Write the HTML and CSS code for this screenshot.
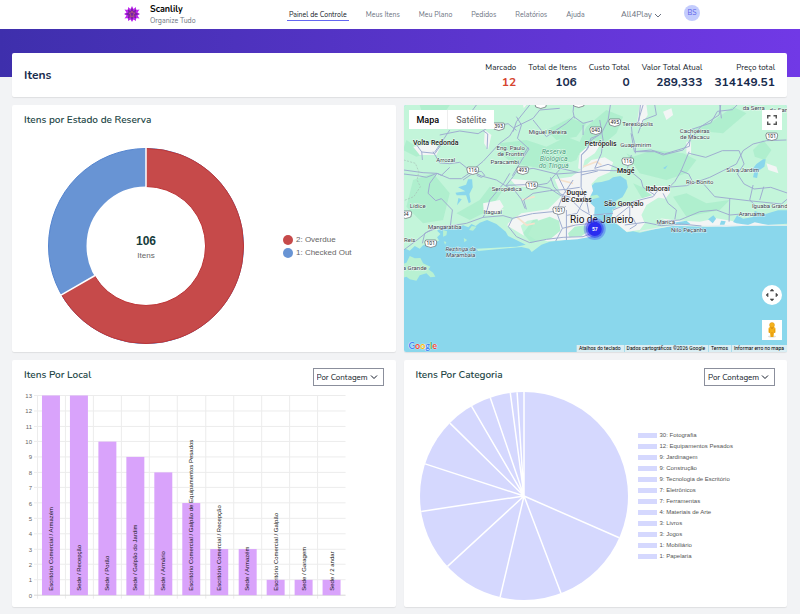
FILE: index.html
```html
<!DOCTYPE html>
<html lang="pt-BR">
<head>
<meta charset="utf-8">
<meta name="viewport" content="width=device-width, initial-scale=1">
<title>Scanlily – Painel de Controle</title>
<link rel="stylesheet" href="styles.css">
</head>
<body>
<header class="topbar">
  <a class="brand" href="#">
    <svg class="brand-logo" viewBox="0 0 32 32" aria-hidden="true">
      <path fill="#c026f0" d="M16 0l3 6 5-4 0 6 7-1-4 6 5 3-5 3 4 6-7-1 0 6-5-3-3 5-3-5-5 3 0-6-7 1 4-6-5-3 5-3-4-6 7 1 0-6 5 4z"/>
      <path fill="#7a1fa8" d="M16 3l3 7 6-4-2 7 7 3-7 3 2 7-6-4-3 7-3-7-6 4 2-7-7-3 7-3-2-7 6 4z"/>
      <path fill="none" stroke="#b0557f" stroke-width="2" d="M16 10l2 4 4 0-3 3 1 5-4-2-4 2 1-5-3-3 4 0z"/>
    </svg>
    <span class="brand-text"><strong>Scanlily</strong><span>Organize Tudo</span></span>
  </a>
  <nav class="nav">
    <a class="active" href="#">Painel de Controle</a>
    <a href="#">Meus Itens</a>
    <a href="#">Meu Plano</a>
    <a href="#">Pedidos</a>
    <a href="#">Relatórios</a>
    <a href="#">Ajuda</a>
  </nav>
  <button class="account" type="button">All4Play
    <svg class="chevron" viewBox="0 0 8 8" aria-hidden="true"><path d="M1 3l3 3 3-3"/></svg>
  </button>
  <button class="avatar" type="button">BS</button>
</header>
<div class="band"></div>

<main class="page">
  <section class="card summary">
    <h1>Itens</h1>
    <dl class="stats">
      <div><dt>Marcado</dt><dd class="alert">12</dd></div>
      <div><dt>Total de Itens</dt><dd>106</dd></div>
      <div><dt>Custo Total</dt><dd>0</dd></div>
      <div><dt>Valor Total Atual</dt><dd>289,333</dd></div>
      <div><dt>Preço total</dt><dd>314149.51</dd></div>
    </dl>
  </section>

  <section class="card status">
    <h2>Itens por Estado de Reserva</h2>
    <div class="status-body">
      <svg class="donut" viewBox="0 0 196 196">
        <circle cx="98" cy="98" r="78.5" fill="none" stroke="#6894d4" stroke-width="38"/>
        <circle cx="98" cy="98" r="97.5" fill="none" stroke="#5585cf"/>
        <path d="M98 19.5A78.5 78.5 0 1 1 30 137.25" fill="none" stroke="#c64a4a" stroke-width="38"/>
        <path d="M98 .5A97.5 97.5 0 1 1 13.6 146.75M98 38.5A59.5 59.5 0 1 1 46.5 127.75" fill="none" stroke="#c03535"/>
        <path d="M98 0V39M12.5 147.4L47 127.5" stroke="#fff" stroke-width="1.5"/>
        <text class="donut-total" x="98" y="97">106</text>
        <text class="donut-label" x="98" y="110">Itens</text>
      </svg>
      <ul class="status-legend">
        <li><i class="dot overdue"></i>2: Overdue</li>
        <li><i class="dot out"></i>1: Checked Out</li>
      </ul>
    </div>
  </section>

  <section class="card map">
    <svg class="map-canvas" viewBox="4 5 384 247" preserveAspectRatio="xMidYMid slice">
      <rect x="0" y="0" width="400" height="260" fill="#8ad7ec"/>
      <g transform="scale(.33333)">
        <path fill="#c3f5da" d="M0 0H1180V376L990 376 925 380 820 378 765 388 720 398 700 394 682 397 655 375 638 364 634 352 645 340 636 330 650 322 640 312 652 300 668 292 676 278 684 262 680 240 662 228 640 232 628 240 605 246 585 248 572 262 576 274 562 284 550 298 562 308 578 318 576 332 584 350 582 362 598 372 602 390 580 396 572 406 555 412 500 419 450 425 425 434 396 456 388 446 365 441 235 453 230 446 350 440 378 434 345 418 325 408 318 395 290 372 262 360 240 368 228 378 215 372 206 382 190 376 172 384 150 384 130 378 112 392 122 402 112 412 118 422 96 428 70 436 60 446 45 438 30 452 18 446 0 450z"/>
        <path fill="#b8f1d2" d="M0 495L20 488 30 468 45 475 62 474 70 490 92 500 86 508 100 518 107 530 92 532 80 520 60 526 50 542 30 538 20 530 0 536zM216 378l14 2-10 12-12-2zM130 390l12 4-2 12-10 4zM192 414l10 6-8 7zM570 288l22-4 8 8-22 6zM132 424l8 2-4 8z"/>
        <g fill="#a5ebc8" opacity=".65">
          <path d="M60 15h90l-20 30-60 5zM300 130l80-10 60 20 60-30 50 20-20 50-80 30-110-20-40-30zM40 240l60-20 50 60-20 80-60 10-50-50zM170 340l70-40 30-40 40 10-40 60-60 30zM560 80l60-50 50 20-20 50-60 50-70 20zM680 160l20 10 60-20 90 10 40 20-30 40-60 20-80-20zM370 400l30-40 50-10 25 30-30 30-50 20zM1060 150l30-30 25 30-20 30-30-10zM820 290l40-10 60 30 70-10-30 30-100 20zM440 90l70-35 50 15-30 40-60 10zM870 90l60-20 70-50 40 20-70 60zM700 250l70 30-40 20zM20 120l60 40-30 10-40-20z"/>
        </g>
        <g fill="#f3f5f5">
          <path d="M325 370l40-30 80-12 40-40-20-50 50-8 40-30 20-20 40-8 25 15-10 30-35 15-20 20 5 20-15 30 20 20-2 30 5 20 15 18-30 20-40 8-90 6-30-12 10-25-10-30-30 5-20 15 10 30-50-30z"/>
          <path d="M640 332l30-20 40-12 50-15 20 5-40 25-15 30 10 25-15 20-40 5-45-38zM742 258l60 0 10 18-15 20-30-5-25-15zM40 140l60-10 20 15-10 20-50 0zM540 160l40-35 25 5-20 30-30 20-8 30-12-5zM720 15l20 0 4 30-20 30-12-10zM250 310l50-10 12 20-20 20-40-5zM330 236l70 6-10 20-40-4zM255 90l20 15-10 45-12-20zM780 355l40 5 80 5 50-10 60 10 60-10 60 5 30 12-180 8-140-3zM370 15l10 0-8 10zM790 35l25-10 5 20-20 15zM1100 190l30 10 6 20-30-10zM860 125l14 0 0 40-14-5z"/>
        </g>
        <path fill="#b5f0d0" d="M385 405l20-40 45-15 28 12 4 30-30 25-42 4zM505 400l20-20 30-4 14 16-24 16-36 4z"/>
        <g fill="none" stroke="#f5e2cd" stroke-width="5"><path d="M350 350l30 25 25-5M480 240l40 10M550 200l40-15 15 10M365 300l40-10M650 350l20 20M500 385l20-10"/></g>
        <g fill="#8ad7ec">
          <path d="M205 238l12 0 2 24-10 20 4 24-6 4-8-24-28 0-4-8 30-4-22-12 24-8zM176 294l10 4-14 18zM1090 178l8 0-4 22-18 12-4 22-12-2 4-20-10 0 16-20zM1000 366l12-20 18 10 30-5 5-18 30 10 40-12 30 0v40l-60 4-40-8-20 8-35-5zM925 358l16-12 8 10-10 14zM820 368l40-6 12 10-30 4zM964 362l14 2-4 10-14 0zM790 204l14-8-8 12z"/>
        </g>
        <path fill="none" stroke="#e6eef0" stroke-width="3" d="M1163 376L990 376 920 378 820 376 720 394"/>
        <g class="roads">
          <path d="M12 222L60 228 80 232 112 220 150 236 185 236 205 222 250 184 300 130 330 108 345 82 400 55 420 30 480 25"/>
          <path d="M12 210L70 218 112 220 125 226 150 202M112 220L90 250 85 280 108 302 125 296 158 330 152 376"/>
          <path d="M40 120l26 36 2 24M66 156l40 4 18-26M100 155l20 34 30 2 30-4 25 20M150 90l-20 30-25 36M250 92l14 10-2 45M230 15l-15 20 20 35M120 105l60-12 55 8 30-18 60-12 25 20"/>
          <path d="M225 218L245 228 290 240 318 258 345 272 365 298 376 326M318 258L340 230 352 212 400 205 470 222 530 218 590 210 640 212 690 212 724 240 730 262 765 285"/>
          <path d="M190 240l35-24 20-2 10 12-10 6-14-6M330 220L312 250 270 300 262 330 250 352 200 370 150 378 112 380 75 400 68 430"/>
          <path d="M12 450l40-30 30-24 35-14M250 352l60-5 28 8 60-14 80-8 20-14M338 355L326 380 350 410 390 428 440 418 490 412 550 410 580 398"/>
          <path d="M318 256L375 254 400 256 450 265 480 285 520 305 545 330 572 345 580 370M380 328L372 300 400 280 450 272 500 268 540 262M415 255l28-5 40-45 50 12"/>
          <path d="M632 15L625 60 605 100 575 120 560 150 545 165 544 262M545 165l20-20 8-30 25-10M544 262L560 300 568 340M600 60l10 60-5 40-20 45 40-12 30 12M544 225l50-12"/>
          <path d="M452 232l10 28 20 22 30 10M470 220l30 60M520 240l-30 45-20 50 18 50-20 38M500 330l0 90M488 385l40-10 50-5M552 300l-20 40-30 6"/>
          <path d="M350 50l15 25-12 40 35 32-20 30-30 50M385 142l-15 25M390 15l-40 50-10 30M400 60l40 50 60-40 22-20 28 20 30-8M522 15l-2 20 4 20M550 75l0 30"/>
          <path d="M722 15l-5 50-22 15 2 20 10 40 0 20M694 100l10 55 50-5 40 12 50-15 25-8 4-50 60-20 20-35 45-5 30-30M695 165l-12 40"/>
          <path d="M705 155l60 0 25 10 60-15 18-25 35-45 55-35 5-30M868 160l50 12 50-20 50 0 15 40-20 30 20 30 30 15 50-5 58 20"/>
          <path d="M868 155l-25 60-18 30-20 20M842 212l25 10 10 20M800 262l60-5 70-25 40-20 40-20 20-40 30-20 40-10 60-2M910 250l35 40 100 12 100 10 18-15"/>
          <path d="M790 280l15 30 25 20-5 30-50 15M640 330l60-25 60-15 15-20M650 350l50-40M690 320l0 40M780 365l60-5 60-25 50-5 40 15 60-5M990 295l-2 70M1060 255l-10 45 20 20M1092 260l-12 40M730 15l-15 50M765 15l5 30-40 15-15 40M960 15l5 40"/>
          <path d="M580 345l60-5M675 375l60-8 50 10 60-5 60 6M700 355l10 20-20 12"/>
        </g>
        <path fill="none" stroke="#a8bfb7" stroke-width="2" stroke-dasharray="6 4" d="M12 180l35 10 10 25-5 25 10 20-20 30-30 12"/>
      </g>
      <g class="shields">
        <g transform="translate(99 26)"><path d="M-5-3h10l1 2-1 4q-5 3-10 0l-1-4z"/><text y="2">393</text></g>
        <g transform="translate(196 30)"><path d="M-5-3h10l1 2-1 4q-5 3-10 0l-1-4z"/><text y="2">040</text></g>
        <g transform="translate(215 22)"><path d="M-5-3h10l1 2-1 4q-5 3-10 0l-1-4z"/><text y="2">495</text></g>
        <g transform="translate(228 61)"><path d="M-5-3h10l1 2-1 4q-5 3-10 0l-1-4z"/><text y="2">116</text></g>
        <g transform="translate(372 36)"><path d="M-5-3h10l1 2-1 4q-5 3-10 0l-1-4z"/><text y="2">101</text></g>
        <g transform="translate(73 70)"><path d="M-5-3h10l1 2-1 4q-5 3-10 0l-1-4z"/><text y="2">116</text></g>
        <g transform="translate(123 70)"><path d="M-5-3h10l1 2-1 4q-5 3-10 0l-1-4z"/><text y="2">493</text></g>
        <g transform="translate(132 85)"><path d="M-5-3h10l1 2-1 4q-5 3-10 0l-1-4z"/><text y="2">116</text></g>
        <g transform="translate(159 110)"><path d="M-5-3h10l1 2-1 4q-5 3-10 0l-1-4z"/><text y="2">101</text></g>
        <g transform="translate(6 114)"><path d="M-5-3h10l1 2-1 4q-5 3-10 0l-1-4z"/><text y="2">94</text></g>
        <g transform="translate(31 143)"><path d="M-5-3h10l1 2-1 4q-5 3-10 0l-1-4z"/><text y="2">101</text></g>
        <g transform="translate(141 4)"><path d="M-5-3h10l1 2-1 4q-5 3-10 0l-1-4z"/></g>
        <g transform="translate(179 3)"><path d="M-5-3h10l1 2-1 4q-5 3-10 0l-1-4z"/></g>
      </g>
      <g class="places">
        <text x="148" y="34">Miguel Pereira</text>
        <text x="111" y="50">Eng. Paulo</text><text x="111" y="56">de Frontin</text>
        <text x="105" y="64">Paracambi</text>
        <text x="46" y="62">Arrozal</text>
        <text x="107" y="91">Seropédica</text>
        <text x="18" y="108">Lídice</text>
        <text x="93" y="114">Itaguaí</text>
        <text x="45" y="129">Mangaratiba</text>
        <text x="10" y="142">Reis</text>
        <text x="15" y="170">a Grande</text>
        <text x="238" y="26">Teresópolis</text>
        <text x="236" y="47">Guapimirim</text>
        <text x="295" y="33">Cachoeiras</text><text x="295" y="39">de Macacu</text>
        <text x="354" y="10">da Serra</text>
        <text x="379" y="12">do San</text>
        <text x="343" y="72">Silva Jardim</text>
        <text x="300" y="84">Rio Bonito</text>
        <text x="370" y="108">Iguaba Grand</text>
        <text x="352" y="116">Araruama</text>
        <text x="266" y="124">Maricá</text>
        <text x="289" y="132">Nilo Peçanha</text>
        <g class="italic"><text x="61" y="151">Restinga da</text><text x="61" y="157">Marambaia</text></g>
        <g class="park"><text x="154" y="54">Reserva</text><text x="154" y="61">Biológica</text><text x="154" y="68">do Tinguá</text></g>
        <g class="town">
          <text x="36" y="45">Volta Redonda</text>
          <text x="201" y="46">Petrópolis</text>
          <text x="226" y="73">Magé</text>
          <text x="258" y="91">Itaboraí</text>
          <text x="177" y="95">Duque</text><text x="177" y="102">de Caxias</text>
          <text x="224" y="106">São Gonçalo</text>
        </g>
        <text class="city" x="202" y="123">Rio de Janeiro</text>
      </g>
      <g class="cluster">
        <circle cx="195" cy="129" r="11" opacity=".3"/>
        <circle cx="195" cy="129" r="9" opacity=".5"/>
        <circle cx="195" cy="129" r="7"/>
        <text x="195" y="131">57</text>
      </g>
    </svg>
    <div class="map-type"><button class="on" type="button">Mapa</button><button type="button">Satélite</button></div>
    <button class="map-btn fullscreen" type="button" aria-label="Tela cheia">
      <svg viewBox="0 0 10 10"><path d="M.7 3.5V.7h2.8M6.5.7h2.8v2.8M9.3 6.5v2.8H6.5M3.5 9.3H.7V6.5"/></svg>
    </button>
    <button class="map-btn pan" type="button" aria-label="Mover mapa">
      <svg viewBox="0 0 12 12"><path d="M4.5 2.3L6 .8l1.5 1.5M9.7 4.5L11.2 6 9.7 7.5M7.5 9.7L6 11.2 4.5 9.7M2.3 7.5L.8 6l1.5-1.5"/></svg>
    </button>
    <button class="map-btn pegman" type="button" aria-label="Street View">
      <svg viewBox="0 0 10 16"><ellipse cx="5" cy="14.5" rx="4" ry="1" fill="#ddd"/><path fill="#f5b21a" d="M1.5 6.500q0-1.500 2-1.500h3q2 0 2 1.500v4l-1.500.5-.5 4H3.500L3 11l-1.500-.5z"/><path fill="#d98b10" d="M3 5.200h4L5 7.200zM4.600 10h.8v5h-.8zM2.500 7h.6v4h-.6zM6.900 7h.6v4h-.6z"/><circle cx="5" cy="3" r="2.500" fill="#f5b21a" stroke="#d98b10" stroke-width=".4"/></svg>
    </button>
    <div class="google" aria-label="Google"><span class="b">G</span><span class="r">o</span><span class="y">o</span><span class="b">g</span><span class="g">l</span><span class="r">e</span></div>
    <div class="credits"><button type="button">Atalhos do teclado</button><span>Dados cartográficos ©2026 Google</span><a href="#">Termos</a><a href="#">Informar erro no mapa</a></div>
  </section>

  <section class="card chart">
    <div class="chart-head">
      <h2>Itens Por Local</h2>
      <div class="picker">
        <select aria-label="Agrupar itens por local"><option>Por Contagem</option></select>
        <svg class="chevron" viewBox="0 0 8 8" aria-hidden="true"><path d="M1 2.500l3 3 3-3"/></svg>
      </div>
    </div>
    <svg class="bars" viewBox="0 0 360 212">
      <path class="grid" d="M10 7.500H322M10 23H322M10 38.500H322M10 53.500H322M10 69H322M10 84.500H322M10 99.500H322M10 115H322M10 130.500H322M10 146H322M10 161.500H322M10 176.500H322M10 192H322M13.500 7V211M41.500 7V211M69.500 7V211M97.500 7V211M125.500 7V211M153.500 7V211M182 7V211M210 7V211M238 7V211M266 7V211M294 7V211"/>
      <path class="axis" d="M10 207.500H322"/>
      <g class="ticks">
        <text x="8" y="10">13</text><text x="8" y="25">12</text><text x="8" y="41">11</text><text x="8" y="56">10</text><text x="8" y="71">9</text><text x="8" y="87">8</text><text x="8" y="102">7</text><text x="8" y="118">6</text><text x="8" y="133">5</text><text x="8" y="148">4</text><text x="8" y="164">3</text><text x="8" y="179">2</text><text x="8" y="194">1</text><text x="8" y="210">0</text>
      </g>
      <g fill="#d9a3fb">
        <rect x="18" y="7.500" width="18" height="200"/><rect x="46" y="7.500" width="18" height="200"/><rect x="74.500" y="53.700" width="18" height="153.800"/><rect x="102.500" y="69" width="18" height="138.500"/><rect x="130.500" y="84.500" width="18" height="123"/><rect x="158.500" y="115.200" width="18" height="92.300"/><rect x="186.500" y="161.300" width="18" height="46.200"/><rect x="215" y="161.300" width="18" height="46.200"/><rect x="243" y="192.100" width="18" height="15.400"/><rect x="271" y="192.100" width="18" height="15.400"/><rect x="299" y="192.100" width="18" height="15.400"/>
      </g>
      <g class="bar-labels">
        <text transform="translate(29 203) rotate(-90)">Escritório Comercial / Armazém</text>
        <text transform="translate(57 203) rotate(-90)">Sede / Recepção</text>
        <text transform="translate(85 203) rotate(-90)">Sede / Porão</text>
        <text transform="translate(113 203) rotate(-90)">Sede / Galpão do Jardim</text>
        <text transform="translate(141 203) rotate(-90)">Sede / Armário</text>
        <text transform="translate(169 203) rotate(-90)">Escritório Comercial / Galpão de Equipamentos Pesados</text>
        <text transform="translate(197 203) rotate(-90)">Escritório Comercial / Recepção</text>
        <text transform="translate(225 203) rotate(-90)">Sede / Armazém</text>
        <text transform="translate(254 203) rotate(-90)">Escritório Comercial / Galpão</text>
        <text transform="translate(282 203) rotate(-90)">Sede / Garagem</text>
        <text transform="translate(310 203) rotate(-90)">Sede / 2 andar</text>
      </g>
    </svg>
  </section>

  <section class="card chart">
    <div class="chart-head">
      <h2>Itens Por Categoria</h2>
      <div class="picker">
        <select aria-label="Agrupar itens por categoria"><option>Por Contagem</option></select>
        <svg class="chevron" viewBox="0 0 8 8" aria-hidden="true"><path d="M1 2.500l3 3 3-3"/></svg>
      </div>
    </div>
    <div class="pie-body">
      <svg class="pie" viewBox="0 0 208 208">
        <circle cx="104" cy="104" r="104" fill="#d5d8fe"/>
        <path stroke="#fff" stroke-width="1.500" d="M104 104L199.200 145.800M104 104L141 201.200M104 104L80.100 205.200M104 104L27.500 174.400M104 104L1.200 119.400M104 104L5.100 71.900M104 104L29.900 31.100M104 104L51.500 14.200M104 104L70.200 5.600M104 104L90.300 .9M104 104L97.100 .2M104 104V0"/>
      </svg>
      <ul class="pie-legend">
        <li>30: Fotografia</li><li>12: Equipamentos Pesados</li><li>9: Jardinagem</li><li>9: Construção</li><li>9: Tecnologia de Escritório</li><li>7: Eletrônicos</li><li>7: Ferramentas</li><li>4: Materiais de Arte</li><li>3: Livros</li><li>3: Jogos</li><li>1: Mobiliário</li><li>1: Papelaria</li>
      </ul>
    </div>
  </section>
</main>
</body>
</html>
```
FILE: styles.css
```css
* { box-sizing: border-box; }
body { margin: 0; background: #f2f3f5; color: #111827; font-family: Nunito, Lato, "Open Sans", sans-serif; font-size: 8px; }
h1, h2, dl, dd, ul { margin: 0; padding: 0; }
ul { list-style: none; }
a { color: inherit; text-decoration: none; }
button { border: 0; padding: 0; background: none; font: inherit; color: inherit; }
svg { display: block; }
.chevron { width: 8px; height: 8px; fill: none; stroke: currentColor; }

.topbar { display: flex; align-items: center; height: 29px; padding: 0 100px 0 124px; background: #fff; }
.brand { display: flex; align-items: center; gap: 10px; width: 163px; }
.brand-logo { width: 16px; height: 16px; margin-bottom: 2px; }
.brand-text { display: flex; flex-direction: column; line-height: 11px; font-size: 7px; color: #6b7280; }
.brand-text strong { font-size: 9px; color: #000; }
.nav { display: flex; gap: 19px; font-size: 7px; line-height: 10px; color: #6b7280; }
.nav a { padding-top: 2px; border-bottom: 1px solid transparent; white-space: nowrap; }
.nav .active { padding: 2px 2px 0; margin-right: -2px; color: #111827; border-color: #6366f1; }
.account { display: flex; align-items: center; gap: 2px; margin-left: auto; font-size: 8px; color: #6b7280; }
.avatar { width: 16px; height: 16px; margin: 0 0 4px 22px; border-radius: 50%; background: #c3ccfd; color: #5b5fe8; font-size: 7px; }
.band { height: 48px; background: linear-gradient(90deg, #3e2fac, #7139e6); }

.page { display: grid; grid-template-columns: 1fr 1fr; gap: 8px; margin-top: -24px; padding: 0 13px 7px 12px; }
.card { position: relative; min-width: 0; background: #fff; border-radius: 2px; box-shadow: 0 1px 1px rgba(0, 0, 0, .08); }
h1 { font-size: 12px; font-weight: 700; color: #172b4d; }
h2 { font-size: 10px; font-weight: 600; line-height: 18px; color: #234646; }

.summary { grid-column: 1 / -1; display: flex; align-items: center; justify-content: space-between; min-height: 44px; padding: 0 12px; }
.stats { display: flex; gap: 12px; text-align: right; line-height: 14px; }
.stats dd { font-size: 12px; font-weight: 700; color: #172b4d; }
.stats .alert { color: #d6452f; }

.status { padding: 6px 12px 7px; }
.status-body { display: flex; align-items: center; gap: 39px; padding: 19px 0 1px 24px; }
.donut { width: 196px; }
.donut text { text-anchor: middle; font-family: "Liberation Sans", sans-serif; }
.donut-total { font-size: 12px; font-weight: bold; fill: #163c3c; }
.donut-label { font-size: 8px; fill: #666; }
.status-legend { font: 8px/13px "Liberation Sans", sans-serif; color: #666; }
.status-legend li { display: flex; align-items: center; gap: 3px; }
.dot { width: 10px; height: 10px; border-radius: 50%; }
.overdue { background: #c64a4a; }
.out { background: #6894d4; }

.map { overflow: hidden; font-family: Roboto, sans-serif; }
.map-canvas { position: absolute; inset: 0; width: 100%; height: 100%; }
.roads { fill: none; stroke: #9fadd0; stroke-width: 3; stroke-linejoin: round; }
.shields path { fill: #fff; stroke: #606870; stroke-width: .7; }
.shields text { font-size: 5px; fill: #222; text-anchor: middle; }
.places text { font-size: 6px; fill: #3d4450; text-anchor: middle; paint-order: stroke; stroke: #fff; stroke-width: 1; stroke-opacity: .7; }
.places .italic text { font-style: italic; }
.places .park text { font-size: 7px; font-style: italic; fill: #3f9b78; }
.places .town text { font-size: 7px; font-weight: 500; fill: #222; }
.places .city { font-size: 10px; fill: #111; }
.cluster circle { fill: #2a2cf0; }
.cluster text { font-size: 5px; font-weight: bold; fill: #fff; text-anchor: middle; }
.map-type { position: absolute; top: 5px; left: 5px; display: flex; height: 19px; background: #fff; font-size: 9px; color: #565656; }
.map-type button { padding: 0 8px; }
.map-type .on { font-weight: 500; color: #000; border-right: 1px solid #eee; }
.map-btn { position: absolute; right: 5px; display: grid; place-items: center; width: 20px; height: 20px; background: #fff; }
.map-btn path { stroke-width: 1.5; }
.fullscreen { top: 5px; }
.fullscreen svg { width: 10px; fill: none; stroke: #555; }
.pan { bottom: 47px; border-radius: 50%; }
.pan svg { width: 12px; fill: none; stroke: #444; }
.pegman { bottom: 12px; }
.pegman svg { width: 10px; height: 16px; }
.google { position: absolute; left: 5px; bottom: 1px; font: bold 9px/11px Lato, sans-serif; text-shadow: 0 0 1px #fff, 0 0 1px #fff; }
.google .b { color: #4285f4; }
.google .r { color: #ea4335; }
.google .y { color: #fbbc05; }
.google .g { color: #34a853; }
.credits { position: absolute; right: 0; bottom: 0; display: flex; font-size: 5px; line-height: 7px; color: #000; }
.credits > * { padding: 0 3px 0 2px; border-left: 1px solid #a9dcea; background: rgba(245, 245, 245, .75); white-space: nowrap; }

.chart { padding: 8px 12px 7px; }
.chart-head { display: flex; align-items: flex-start; justify-content: space-between; height: 18px; }
.chart-head h2 { line-height: 14px; }
.picker { position: relative; }
.picker select { appearance: none; display: block; width: 71px; height: 18px; padding: 0 3px; border: 1px solid #8b8f9c; border-radius: 0; background: #fff; color: #111827; font: inherit; }
.picker .chevron { position: absolute; top: 5px; right: 6px; }
.bars { width: 100%; margin-top: 2px; font-family: "Liberation Sans", sans-serif; font-size: 6px; }
.grid { stroke: #ececec; }
.axis { stroke: #d8d8d8; }
.ticks { fill: #666; text-anchor: end; }
.bar-labels { fill: #111; }
.pie-body { display: flex; align-items: center; gap: 10px; padding: 6px 0 0 4px; }
.pie { width: 208px; }
.pie-legend { font: 6px/11px "Liberation Sans", sans-serif; color: #555; }
.pie-legend li { display: flex; align-items: center; gap: 3px; }
.pie-legend li::before { content: ""; width: 19px; height: 5px; background: #d5d8fe; }
```
